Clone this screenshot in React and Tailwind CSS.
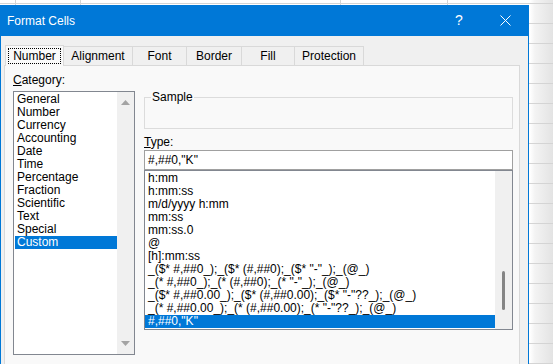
// Format Cells dialog (Excel) over the sheet grid
const categories = ['General', 'Number', 'Currency', 'Accounting', 'Date', 'Time', 'Percentage', 'Fraction', 'Scientific', 'Text', 'Special', 'Custom']

const formats = [
    'h:mm',
    'h:mm:ss',
    'm/d/yyyy h:mm',
    'mm:ss',
    'mm:ss.0',
    '@',
    '[h]:mm:ss',
    '_($* #,##0_);_($* (#,##0);_($* "-"_);_(@_)',
    '_(* #,##0_);_(* (#,##0);_(* "-"_);_(@_)',
    '_($* #,##0.00_);_($* (#,##0.00);_($* "-"??_);_(@_)',
    '_(* #,##0.00_);_(* (#,##0.00);_(* "-"??_);_(@_)',
    '#,##0,"K"',
]

const tabs = [
    { label: 'Alignment', w: 'w-[69px]' },
    { label: 'Font', w: 'w-[54px]' },
    { label: 'Border', w: 'w-[55px]' },
    { label: 'Fill', w: 'w-[53px]' },
    { label: 'Protection', w: 'w-[69px]' },
]

function Tabs() {
    return (
        <div className="flex items-end h-[21px] pl-[1px] relative z-10">
            {/* 선택된 탭 - 조금 더 높고 패널과 이어짐 */}
            <div className="w-[59px] h-[21px] mb-[-1px] bg-[#f9f9f9] border border-b-0 border-[#d9d9d9] p-[2px] pb-[2px]">
                <div className="h-full border border-dotted border-black flex items-center justify-center">
                    Number
                </div>
            </div>
            {tabs.map((t) => (
                <div key={t.label}
                     className={`${t.w} h-[19px] bg-[#f0f0f0] border-t border-r border-[#d9d9d9] flex items-center justify-center`}>
                    {t.label}
                </div>
            ))}
        </div>
    )
}

function CategoryList() {
    return (
        <div className="w-[122px] h-[264px] border border-[#828790] bg-white flex">
            <div className="flex-1 pt-[1px] pl-[1px]">
                {categories.map((c) => (
                    <div key={c}
                         className={`h-[13px] leading-[13px] px-[2px] ${c === 'Custom' ? 'bg-[#0078d7] text-white' : ''}`}>
                        {c}
                    </div>
                ))}
            </div>
            <div className="w-[17px] bg-[#f0f0f0] flex flex-col justify-between items-center py-[8px]">
                <svg width="9" height="5" viewBox="0 0 9 5"><path d="M4.5 0L9 5H0z" fill="#a3a3a3" /></svg>
                <svg width="9" height="5" viewBox="0 0 9 5"><path d="M0 0h9L4.5 5z" fill="#a3a3a3" /></svg>
            </div>
        </div>
    )
}

function TypeList() {
    return (
        <div className="h-[160px] border border-[#828790] bg-white flex">
            <div className="flex-1 min-w-0 pt-[1px] overflow-hidden">
                {formats.map((f, i) => (
                    <div key={i}
                         className={`h-[13px] leading-[13px] pl-[3px] whitespace-pre ${i === formats.length - 1 ? 'bg-[#0078d7] text-white' : ''}`}>
                        {f}
                    </div>
                ))}
            </div>
            <div className="w-[17px] bg-[#f0f0f0] flex justify-center pt-[100px]">
                <div className="w-[3px] h-[39px] rounded-full bg-[#858585]" />
            </div>
        </div>
    )
}

export default function App() {
    return (
        <div className="w-[553px] h-[364px] overflow-hidden relative bg-[linear-gradient(to_right,#ffffff,#ffffff_530px,#f3f3f3_535px,#e3e3e3)] text-[12px] text-black"
             style={{ fontFamily: '"Liberation Sans", Arial, sans-serif' }}>
            {/* 시트 격자선 */}
            <div className="absolute inset-0 bg-[repeating-linear-gradient(to_bottom,transparent_0px,transparent_3px,#d4d4d4_3px,#d4d4d4_4px,transparent_4px,transparent_20px)]" />
            <div className="relative flex h-[5px]">
                <div className="w-[16px] border-r border-[#d4d4d4]" />
                <div className="w-[65px] border-r border-[#d4d4d4]" />
                <div className="w-[260px] border-r border-[#d4d4d4]" />
                <div className="w-[107px] border-r border-[#d4d4d4]" />
            </div>

            {/* 대화상자 창 */}
            <div className="absolute left-0 top-[5px] w-[529px] h-[370px] bg-[#f0f0f0] border-x border-[#0078d7] flex flex-col">
                <div className="h-[31px] bg-[#0078d7] text-white flex items-center">
                    <div className="flex-1 pl-[6px]">Format Cells</div>
                    <div className="w-[46px] text-center text-[14px]">?</div>
                    <div className="w-[46px] flex justify-center">
                        <svg width="11" height="11" viewBox="0 0 11 11">
                            <path d="M0.5 0.5L10.5 10.5M10.5 0.5L0.5 10.5" stroke="white" strokeWidth="1" />
                        </svg>
                    </div>
                </div>

                <div className="pl-[3px] pr-[8px] pt-[8px] flex-1 flex flex-col">
                    <Tabs />
                    <div className="flex-1 bg-[#f9f9f9] border border-[#d9d9d9] pl-[8px] pr-[6px] pt-[7px] flex gap-[9px]">
                        <div className="flex flex-col">
                            <div className="h-[14px] leading-[14px] mb-[4px]"><span className="underline">C</span>ategory:</div>
                            <CategoryList />
                        </div>
                        <div className="flex-1 flex flex-col">
                            <div className="mt-[24px] h-[32px] border border-[#dcdcdc] relative">
                                <span className="absolute left-[6px] top-[-8px] bg-[#f9f9f9] px-[1px] leading-[14px]">Sample</span>
                            </div>
                            <div className="h-[14px] leading-[14px] mt-[6px] mb-[1px]"><span className="underline">T</span>ype:</div>
                            <div className="h-[20px] border border-[#a0a0a0] bg-white pl-[3px] flex items-center">#,##0,"K"</div>
                            <TypeList />
                        </div>
                    </div>
                </div>
            </div>
        </div>
    )
}
